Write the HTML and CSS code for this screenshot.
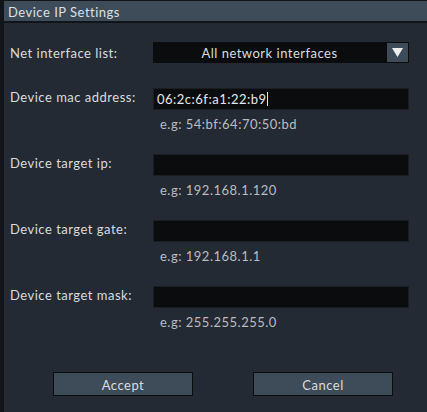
FILE: index.html
```html
<!DOCTYPE html>
<html>
<head>
<meta charset="utf-8">
<link rel="stylesheet" href="styles.css">
</head>
<body>
<div class="dialog">
  <div class="titlebar">Device IP Settings</div>
  <div class="form">
    <div class="row row-select">
      <div class="label">Net interface list:</div>
      <div class="select">
        <div class="select-text">All network interfaces</div>
        <div class="select-btn"><svg width="11" height="9" viewBox="0 0 11 9"><polygon points="0,0 11,0 5.5,9" fill="#eceef0"/></svg></div>
      </div>
    </div>
    <div class="row">
      <div class="label">Device mac address:</div>
      <div class="field">
        <div class="input">06:2c:6f:a1:22:b9<span class="caret"></span></div>
        <div class="hint">e.g: 54:bf:64:70:50:bd</div>
      </div>
    </div>
    <div class="row">
      <div class="label">Device target ip:</div>
      <div class="field">
        <div class="input"></div>
        <div class="hint">e.g: 192.168.1.120</div>
      </div>
    </div>
    <div class="row">
      <div class="label">Device target gate:</div>
      <div class="field">
        <div class="input"></div>
        <div class="hint">e.g: 192.168.1.1</div>
      </div>
    </div>
    <div class="row">
      <div class="label">Device target mask:</div>
      <div class="field">
        <div class="input"></div>
        <div class="hint">e.g: 255.255.255.0</div>
      </div>
    </div>
    <div class="buttons">
      <div class="btn">Accept</div>
      <div class="btn">Cancel</div>
    </div>
  </div>
</div>
</body>
</html>
```

FILE: styles.css
```css
html, body {
  margin: 0;
  padding: 0;
  background: #232a33;
}
body {
  font-family: Lato, "Open Sans", sans-serif;
  font-size: 13px;
  letter-spacing: 0.5px;
  color: #d9dcdf;
}
.dialog {
  width: 423px;
  height: 411px;
  border-left: 4px solid #111418;
  border-top: 1px solid #111418;
  background: #232a33;
}
.titlebar {
  height: 20px;
  line-height: 22px;
  background: #3e4b58;
  border-bottom: 2px solid #111418;
  padding-left: 4px;
  color: #dde0e3;
}
.form {
  padding: 19px 0 0 6px;
}
.row {
  display: flex;
  align-items: flex-start;
}
.label {
  width: 143px;
  line-height: 18px;
  padding-top: 0;
}
.row-select {
  margin-bottom: 25px;
}
.row-select .label {
  padding-top: 2px;
}
.select {
  width: 256px;
  height: 21px;
  display: flex;
  background: #0b0c0e;
  box-sizing: border-box;
}
.select-text {
  flex: 1;
  text-align: center;
  line-height: 23px;
}
.select-btn {
  width: 23px;
  height: 21px;
  box-sizing: border-box;
  background: #3e4b58;
  border: 1px solid #0b0c0e;
  display: flex;
  align-items: center;
  justify-content: center;
}
.field {
  width: 256px;
}
.input {
  height: 22px;
  background: #0b0c0e;
  border: 1px solid #1a1d21;
  box-sizing: border-box;
  padding-left: 3px;
  line-height: 20px;
  color: #e6e8ea;
  display: flex;
  align-items: center;
}
.caret {
  display: inline-block;
  width: 1px;
  height: 14px;
  background: #e6e8ea;
  margin-left: 0;
}
.hint {
  margin-top: 6px;
  height: 16px;
  line-height: 17px;
  padding-left: 7px;
  color: #b9bdc2;
  margin-bottom: 22px;
}
.buttons {
  display: flex;
  gap: 60px;
  padding-left: 43px;
  margin-top: 20px;
}
.btn {
  width: 140px;
  height: 24px;
  box-sizing: border-box;
  border: 1px solid #0b0c0e;
  background: #3e4b58;
  text-align: center;
  line-height: 25px;
  color: #d9dcdf;
}
```
